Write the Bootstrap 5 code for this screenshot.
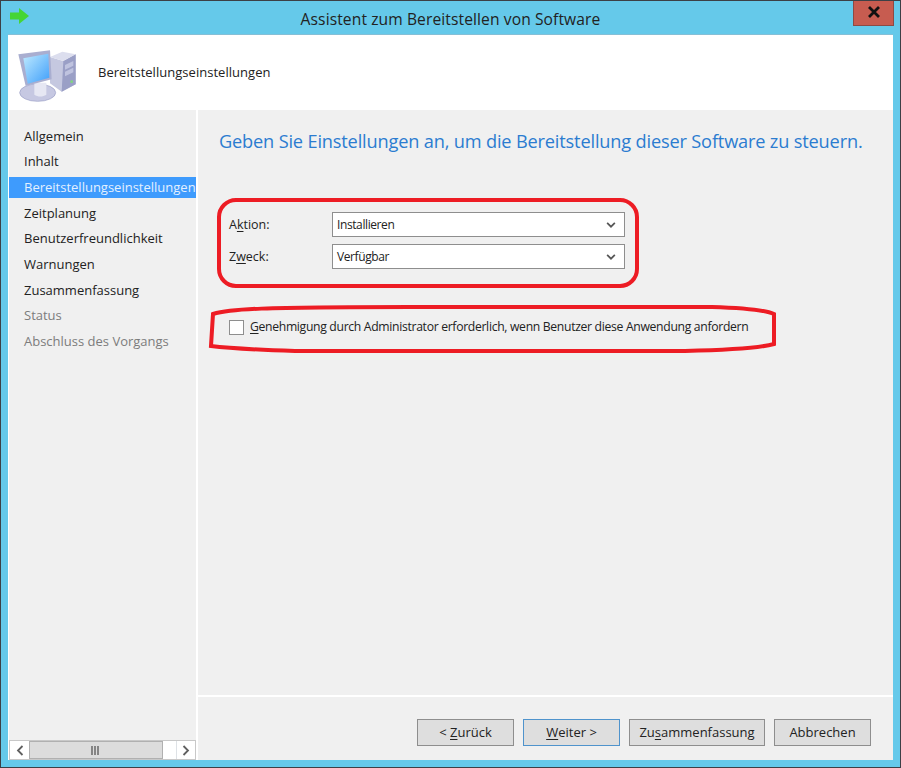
<!DOCTYPE html>
<html lang="de">
<head>
<meta charset="utf-8">
<title>Assistent zum Bereitstellen von Software</title>
<link href="https://cdn.jsdelivr.net/npm/bootstrap@5.3.0/dist/css/bootstrap.min.css" rel="stylesheet">
<style>
html,body{margin:0;padding:0;background:#65c9ea;overflow:hidden}
body{font-family:"Open Sans","Noto Sans","Liberation Sans",sans-serif;font-size:13px;color:#222}
.win-frame{width:901px;height:768px;position:relative;background:#65c9ea;border:1px solid #3c4046;padding:0 7px 7px 7px;overflow:hidden}
.title-bar{height:33px;flex:none;position:relative}
.title-text{font-size:15.6px;color:#222;line-height:1;padding-top:11px;letter-spacing:.1px}
.arrow-ico{position:absolute;left:2px;top:7px}
.close-x{position:absolute;right:-1px;top:-1px;width:41px;height:26px;background:#c75c50;border:1px solid #8d4a44;border-top:0}
.close-x svg{display:block;margin:6px auto 0}
.wiz-body{background:#fff;min-height:0;border-top:1px solid #86bfd6}
.head-band{height:75px;flex:none;gap:13px}
.monitor-ico{margin-top:4px;flex:none}
.head-label{font-size:13px;color:#222;letter-spacing:.03px}
.wiz-cols{min-height:0;gap:2px}
.side-col{width:187px;flex:none;background:#f0f0f0;margin-left:1px}
.side-list{padding-top:13.5px}
.side-item{height:25.7px;padding-left:15px;line-height:25px;font-size:13px;color:#222;white-space:nowrap;overflow:hidden}
.side-on{background:#3e9bfd;color:#e4f0ff;height:21px;line-height:20px;margin:2px 0 2.7px}
.side-off{color:#7c7c7c}
.scroll-strip{height:20px;border:1px solid #c8c8c8;background:#fff;flex:none}
.scroll-btn{width:19px;background:#fff}
.scroll-thumb{width:134px;background:#dcdcdc;border:1px solid #b0b0b0}
.main-col{background:#f0f0f0;min-width:0}
.main-top{min-height:0}
.page-head{font-size:18.2px;color:#2b7cd0;padding:19px 0 0 21px;line-height:24px;white-space:nowrap;letter-spacing:-.17px}
.form-zone{padding:59px 0 0 31px}
.field-line{height:32px}
.field-name{width:103px;font-size:12.5px;line-height:25px;color:#222;flex:none}
.combo-box{width:293px;height:25px;background:#fff;border:1px solid #8e8e8e;padding:0 8px 0 4px;font-size:12px;letter-spacing:-.4px;color:#222}
.check-line{margin-top:42px;gap:6px;font-size:12.2px;color:#222;white-space:nowrap;letter-spacing:-.32px}
.check-box{width:15px;height:15px;background:#fff;border:1px solid #8e8e8e;flex:none}
.foot-bar{height:65px;flex:none;border-top:2px solid #fff;gap:9px;padding:22px 22px 0 0}
.wiz-btn{height:27px;background:#dedede;border:1px solid #8e8e8e;font-size:13px;color:#222;text-align:center;line-height:25px;flex:none}
.btn-focus{border-color:#4f93cc}
.btn-short{width:97px}
.btn-wide{width:136px}
.mark-layer{position:absolute;left:-1px;top:-1px;pointer-events:none}
.u-line{text-decoration:underline;text-underline-offset:2px;text-decoration-thickness:1px}
</style>
</head>
<body>
<div class="win-frame d-flex flex-column">
  <div class="title-bar text-center">
    <svg class="arrow-ico" width="20" height="16" viewBox="0 0 20 16"><path d="M0 4.5h9V0l10 8-10 8v-4.5H0z" fill="#45d535"/></svg>
    <div class="title-text">Assistent zum Bereitstellen von Software</div>
    <div class="close-x"><svg width="14" height="12" viewBox="0 0 14 12"><path d="M2 1l10 10M12 1L2 11" stroke="#111" stroke-width="2.8"/></svg></div>
  </div>
  <div class="wiz-body flex-grow-1 d-flex flex-column">
    <div class="head-band d-flex align-items-center">
      <svg class="monitor-ico" width="77" height="68" viewBox="9 0 231 204">
        <defs><linearGradient id="scr" x1="0" y1="0" x2="1" y2="1"><stop offset="0" stop-color="#bfeaff"/><stop offset="1" stop-color="#3f9ffa"/></linearGradient></defs>
        <path d="M135 48l40 12 37-20v90l-42 22-35-25z" fill="#c5c8e0"/>
        <path d="M175 60l37-20v90l-42 22z" fill="#9a9fc6"/>
        <path d="M135 48l40 12 37-20-40-8z" fill="#dcdeee"/>
        <path d="M180 72l25-12v14l-25 12zM180 92l25-12v14l-25 12z" fill="#bfc3df"/>
        <circle cx="200" cy="122" r="4" fill="#7fd87f"/>
        <ellipse cx="98" cy="155" rx="54" ry="26" fill="#c6c8e2" stroke="#9a9fc6" stroke-width="2"/>
        <path d="M88 125h36v36c-12 8-27 6-36 0z" fill="#e6e7f3"/>
        <path d="M40 40L135 28l5 87-78 20z" fill="#a9aed0"/>
        <path d="M55 52l75-14 3 72-65 18z" fill="url(#scr)"/>
      </svg>
      <div class="head-label">Bereitstellungseinstellungen</div>
    </div>
    <div class="wiz-cols flex-grow-1 d-flex">
      <div class="side-col d-flex flex-column">
        <div class="side-list flex-grow-1">
          <div class="side-item">Allgemein</div>
          <div class="side-item">Inhalt</div>
          <div class="side-item side-on">Bereitstellungseinstellungen</div>
          <div class="side-item">Zeitplanung</div>
          <div class="side-item">Benutzerfreundlichkeit</div>
          <div class="side-item">Warnungen</div>
          <div class="side-item">Zusammenfassung</div>
          <div class="side-item side-off">Status</div>
          <div class="side-item side-off">Abschluss des Vorgangs</div>
        </div>
        <div class="scroll-strip d-flex">
          <div class="scroll-btn d-flex align-items-center justify-content-center"><svg width="8" height="11" viewBox="0 0 8 11"><path d="M6.5 1L2 5.5 6.5 10" fill="none" stroke="#606060" stroke-width="1.8"/></svg></div>
          <div class="scroll-thumb d-flex align-items-center justify-content-center"><svg width="10" height="9" viewBox="0 0 10 9"><path d="M1 0v9M4 0v9M7 0v9" stroke="#707070" stroke-width="1.6"/></svg></div>
          <div class="flex-grow-1"></div>
          <div class="scroll-btn d-flex align-items-center justify-content-center border-start"><svg width="8" height="11" viewBox="0 0 8 11"><path d="M1.5 1L6 5.5 1.5 10" fill="none" stroke="#606060" stroke-width="1.8"/></svg></div>
        </div>
      </div>
      <div class="main-col flex-grow-1 d-flex flex-column">
        <div class="main-top flex-grow-1">
          <div class="page-head">Geben Sie Einstellungen an, um die Bereitstellung dieser Software zu steuern.</div>
          <div class="form-zone">
            <div class="field-line d-flex align-items-start">
              <div class="field-name">A<span class="u-line">k</span>tion:</div>
              <div class="combo-box d-flex align-items-center justify-content-between"><span>Installieren</span><svg width="10" height="6" viewBox="0 0 11 7"><path d="M1 1l4.5 4.5L10 1" fill="none" stroke="#555" stroke-width="2"/></svg></div>
            </div>
            <div class="field-line d-flex align-items-start">
              <div class="field-name">Z<span class="u-line">w</span>eck:</div>
              <div class="combo-box d-flex align-items-center justify-content-between"><span>Verfügbar</span><svg width="10" height="6" viewBox="0 0 11 7"><path d="M1 1l4.5 4.5L10 1" fill="none" stroke="#555" stroke-width="2"/></svg></div>
            </div>
            <div class="check-line d-flex align-items-center">
              <div class="check-box"></div>
              <span><span class="u-line">G</span>enehmigung durch Administrator erforderlich, wenn Benutzer diese Anwendung anfordern</span>
            </div>
          </div>
        </div>
        <div class="foot-bar d-flex justify-content-end">
          <div class="wiz-btn btn-short">&lt; <span class="u-line">Z</span>urück</div>
          <div class="wiz-btn btn-short btn-focus"><span class="u-line">W</span>eiter &gt;</div>
          <div class="wiz-btn btn-wide">Zu<span class="u-line">s</span>ammenfassung</div>
          <div class="wiz-btn btn-short">Abbrechen</div>
        </div>
      </div>
    </div>
  </div>
  <svg class="mark-layer" width="901" height="768" viewBox="0 0 901 768" fill="none" stroke="#ed1c24" stroke-width="4">
    <rect x="219" y="200" width="418" height="86" rx="17"/>
    <path d="M213 314C230 309 260 307 410 307H712C745 308 765 310 774 314V344C760 348 730 350 685 351H295C265 350 235 349 211 346Z"/>
  </svg>
</div>
</body>
</html>
